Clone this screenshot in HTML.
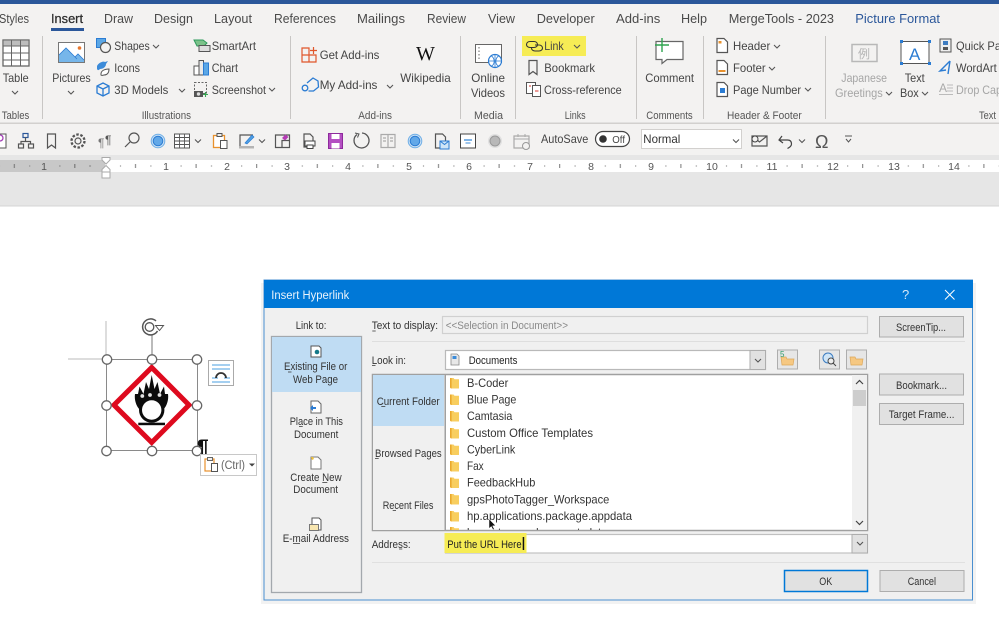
<!DOCTYPE html>
<html lang="en"><head><meta charset="utf-8"><title>Insert Hyperlink</title>
<style>
html,body{margin:0;padding:0;background:#fff;width:999px;height:617px;overflow:hidden}
svg.root{display:block;filter:blur(.3px)}
text{font-family:"Liberation Sans",sans-serif;font-size:12px;fill:#444}
.tab{font-size:13px;fill:#4a4a4a}
.g{font-size:11px;fill:#555}
.d{font-size:11px;fill:#333}
.f{font-size:12px;fill:#333}
.dis{fill:#a5a5a5}
.r{font-size:10.5px;fill:#555;text-anchor:middle}
.ln{fill:none;stroke:#555;stroke-width:1.2}
.bl{fill:none;stroke:#2b7cd3;stroke-width:1.3}
.btn{fill:#e1e1e1;stroke:#adadad;stroke-width:1}
</style></head><body>
<svg class="root" width="999" height="617" viewBox="0 0 999 617" xmlns="http://www.w3.org/2000/svg">
<defs>
<pattern id="rt" x="105" y="160" width="60.6" height="12" patternUnits="userSpaceOnUse">
<rect x="15" y="5.5" width="1" height="1" fill="#666"/><rect x="30" y="4" width="1" height="4" fill="#777"/><rect x="45.4" y="5.5" width="1" height="1" fill="#666"/>
</pattern>
<symbol id="fd" viewBox="0 0 10 12" overflow="visible"><path d="M0 1h3.5l1 1.2H9v9.3H1L0 10.500z" fill="#f8ce5f"/><path d="M0 1h1.600v10.500H1L0 10.500z" fill="#eaa92e"/></symbol>
<symbol id="ch" viewBox="0 0 8 5" overflow="visible"><path d="M1 1l3 3 3-3" fill="none" stroke="#555" stroke-width="1.100"/></symbol>
</defs>

<!-- backgrounds -->
<rect width="999" height="617" fill="#fff"/>
<rect width="999" height="4" fill="#2b579a"/>
<rect y="4" width="999" height="152" fill="#f3f2f1"/>
<rect y="122.500" width="999" height="1.500" fill="#d2d0ce"/>
<rect y="155" width="999" height="51" fill="#e6e6e6"/>
<rect y="205.500" width="999" height="1" fill="#d4d4d4"/>
<rect y="160" width="999" height="12" fill="#fff"/>
<rect y="160" width="105" height="12" fill="#c8c8c8"/>
<rect y="160" width="999" height="12" fill="url(#rt)"/>

<!-- tabs -->
<text class="tab" x="-1" y="23" textLength="30" lengthAdjust="spacingAndGlyphs">Styles</text>
<text class="tab" x="51" y="23" textLength="32" lengthAdjust="spacingAndGlyphs" style="fill:#2b2b2b" stroke="#333" stroke-width=".25">Insert</text>
<text class="tab" x="104" y="23" textLength="29" lengthAdjust="spacingAndGlyphs">Draw</text>
<text class="tab" x="154" y="23" textLength="39" lengthAdjust="spacingAndGlyphs">Design</text>
<text class="tab" x="214" y="23" textLength="38" lengthAdjust="spacingAndGlyphs">Layout</text>
<text class="tab" x="274" y="23" textLength="62" lengthAdjust="spacingAndGlyphs">References</text>
<text class="tab" x="357" y="23" textLength="48" lengthAdjust="spacingAndGlyphs">Mailings</text>
<text class="tab" x="427" y="23" textLength="39" lengthAdjust="spacingAndGlyphs">Review</text>
<text class="tab" x="488" y="23" textLength="27" lengthAdjust="spacingAndGlyphs">View</text>
<text class="tab" x="536.700" y="23" textLength="58" lengthAdjust="spacingAndGlyphs">Developer</text>
<text class="tab" x="616" y="23" textLength="44.300" lengthAdjust="spacingAndGlyphs">Add-ins</text>
<text class="tab" x="681" y="23" textLength="26" lengthAdjust="spacingAndGlyphs">Help</text>
<text class="tab" x="728.700" y="23" textLength="105.300" lengthAdjust="spacingAndGlyphs">MergeTools - 2023</text>
<text class="tab" x="855.300" y="23" textLength="84.700" lengthAdjust="spacingAndGlyphs" style="fill:#2b579a">Picture Format</text>
<rect x="51" y="28" width="33" height="3" fill="#2b579a"/>

<!-- ribbon separators -->
<g fill="#c8c6c4"><rect x="42" y="36" width="1" height="83"/><rect x="290" y="36" width="1" height="83"/><rect x="460" y="36" width="1" height="83"/><rect x="515" y="36" width="1" height="83"/><rect x="636" y="36" width="1" height="83"/><rect x="703" y="36" width="1" height="83"/><rect x="825" y="36" width="1" height="83"/></g>

<rect x="522" y="36" width="64" height="20" fill="#f6ec55"/>

<!-- ribbon labels -->
<text x="2.700" y="82" textLength="26" lengthAdjust="spacingAndGlyphs">Table</text>
<text x="52.300" y="82" textLength="38.400" lengthAdjust="spacingAndGlyphs">Pictures</text>
<text x="114.300" y="50" textLength="35.400" lengthAdjust="spacingAndGlyphs">Shapes</text>
<text x="114.300" y="72" textLength="25.700" lengthAdjust="spacingAndGlyphs">Icons</text>
<text x="114.300" y="94" textLength="54" lengthAdjust="spacingAndGlyphs">3D Models</text>
<text x="211.700" y="50" textLength="44.300" lengthAdjust="spacingAndGlyphs">SmartArt</text>
<text x="211.700" y="72" textLength="26.300" lengthAdjust="spacingAndGlyphs">Chart</text>
<text x="211.700" y="94" textLength="54.300" lengthAdjust="spacingAndGlyphs">Screenshot</text>
<text x="319.700" y="59" textLength="59.700" lengthAdjust="spacingAndGlyphs">Get Add-ins</text>
<text x="319.700" y="89" textLength="57.700" lengthAdjust="spacingAndGlyphs">My Add-ins</text>
<text x="400.300" y="82" textLength="50.400" lengthAdjust="spacingAndGlyphs">Wikipedia</text>
<text x="471.300" y="82" textLength="33.700" lengthAdjust="spacingAndGlyphs">Online</text>
<text x="471" y="97" textLength="34" lengthAdjust="spacingAndGlyphs">Videos</text>
<text x="544.300" y="50" textLength="19.400" lengthAdjust="spacingAndGlyphs">Link</text>
<text x="544.300" y="72" textLength="50.700" lengthAdjust="spacingAndGlyphs">Bookmark</text>
<text x="544" y="94" textLength="77.700" lengthAdjust="spacingAndGlyphs">Cross-reference</text>
<text x="645.300" y="82" textLength="48.700" lengthAdjust="spacingAndGlyphs">Comment</text>
<text x="733" y="50" textLength="37.300" lengthAdjust="spacingAndGlyphs">Header</text>
<text x="733" y="72" textLength="32.700" lengthAdjust="spacingAndGlyphs">Footer</text>
<text x="733" y="94" textLength="68" lengthAdjust="spacingAndGlyphs">Page Number</text>
<text class="dis" x="841.300" y="82" textLength="45.700" lengthAdjust="spacingAndGlyphs">Japanese</text>
<text class="dis" x="835" y="97" textLength="47.700" lengthAdjust="spacingAndGlyphs">Greetings</text>
<text x="904.700" y="82" textLength="20" lengthAdjust="spacingAndGlyphs">Text</text>
<text x="900" y="97" textLength="18.700" lengthAdjust="spacingAndGlyphs">Box</text>
<text x="956" y="50" textLength="45" lengthAdjust="spacingAndGlyphs">Quick Pa</text>
<text x="956" y="72" textLength="40.700" lengthAdjust="spacingAndGlyphs">WordArt</text>
<text class="dis" x="956" y="94" textLength="46" lengthAdjust="spacingAndGlyphs">Drop Cap</text>

<text class="g" x="1.700" y="119" textLength="27.600" lengthAdjust="spacingAndGlyphs">Tables</text>
<text class="g" x="141.700" y="119" textLength="49.300" lengthAdjust="spacingAndGlyphs">Illustrations</text>
<text class="g" x="358.300" y="119" textLength="33.700" lengthAdjust="spacingAndGlyphs">Add-ins</text>
<text class="g" x="474" y="119" textLength="29" lengthAdjust="spacingAndGlyphs">Media</text>
<text class="g" x="564.700" y="119" textLength="21" lengthAdjust="spacingAndGlyphs">Links</text>
<text class="g" x="646.300" y="119" textLength="46.400" lengthAdjust="spacingAndGlyphs">Comments</text>
<text class="g" x="727" y="119" textLength="74.700" lengthAdjust="spacingAndGlyphs">Header &amp; Footer</text>
<text class="g" x="979" y="119" textLength="17" lengthAdjust="spacingAndGlyphs">Text</text>

<!-- ribbon chevrons -->
<use href="#ch" x="11" y="90" width="8" height="5"/>
<use href="#ch" x="67" y="90" width="8" height="5"/>
<use href="#ch" x="152" y="44" width="8" height="5"/>
<use href="#ch" x="178" y="88" width="8" height="5"/>
<use href="#ch" x="268" y="87" width="8" height="5"/>
<use href="#ch" x="386" y="84" width="8" height="5"/>
<use href="#ch" x="573" y="44" width="8" height="5"/>
<use href="#ch" x="773" y="44" width="8" height="5"/>
<use href="#ch" x="768" y="66" width="8" height="5"/>
<use href="#ch" x="804" y="87" width="8" height="5"/>
<use href="#ch" x="885" y="91" width="8" height="5"/>
<use href="#ch" x="921" y="91" width="8" height="5"/>

<!-- Table icon -->
<rect x="3" y="40" width="26" height="26" fill="#fff" stroke="#666" stroke-width="1.300"/>
<rect x="3" y="40" width="26" height="6" fill="#bdbdbd" stroke="#666"/>
<path d="M11.500 40v26M20.500 40v26M3 53h26M3 60h26" stroke="#666" fill="none"/>
<!-- Pictures -->
<rect x="58.500" y="42.500" width="26" height="20" fill="#fff" stroke="#777"/>
<path d="M59 62V55l7-7 9 9 3-3 6 6v2z" fill="#76b6ea"/>
<path d="M75 57l3-3 6 6" fill="none" stroke="#2b7cd3" stroke-width=".8"/>
<path d="M59 55l7-7 11 11" fill="none" stroke="#2b7cd3" stroke-width=".8"/>
<circle cx="79.500" cy="48" r="1.800" fill="#e8772e"/>
<!-- Shapes -->
<rect x="96.500" y="38.500" width="9" height="9" fill="#5ba7e6" stroke="#2b7cd3"/>
<circle cx="105.500" cy="47.500" r="5" fill="#f3f2f1" stroke="#555" stroke-width="1.200"/>
<!-- Icons -->
<path d="M97 66c2-4 7-5 8-4l3-1-2 3c0 3-3 5-6 5-1 1-2 2-3 0z" fill="#3c8bd9"/>
<path d="M101 74c0-3 3-5 8-5 0 4-2 6-5 6-1 0-2 1-3 0z" fill="#fff" stroke="#555"/>
<!-- 3D models -->
<path class="bl" d="M103 83l6 3v7l-6 3-6-3v-7zM97 86l6 3 6-3M103 89v7"/>
<!-- SmartArt -->
<path d="M194 40h9l4 3-3 3h-7z" fill="#7cc28a" stroke="#2d9a5c"/>
<rect x="199" y="45.500" width="11" height="6" fill="#ddd" stroke="#555"/>
<!-- Chart -->
<rect x="194" y="66" width="5" height="9" fill="#fff" stroke="#555"/>
<rect x="199" y="60.500" width="4.500" height="14.500" fill="#e9e9e9" stroke="#555"/>
<rect x="203.500" y="63" width="5" height="12" fill="#5ba7e6" stroke="#2b7cd3"/>
<!-- Screenshot -->
<rect x="194.500" y="82.500" width="12" height="11" fill="none" stroke="#666" stroke-dasharray="2 1.500"/>
<rect x="194" y="91" width="9" height="6" fill="#555"/><circle cx="198.500" cy="94" r="1.700" fill="#ddd"/>
<path d="M205.500 92v5M203 94.500h5" stroke="#35a853" stroke-width="1.100"/>
<!-- Get add-ins -->
<path d="M302 48h7v7h-7zM302 55h7v7h-7zM309 55h7v7h-7z" fill="none" stroke="#e0562b" stroke-width="1.200"/>
<path d="M313.500 47v7M310 50.500h7" stroke="#e0562b" stroke-width="1.200"/>
<!-- My add-ins -->
<path class="bl" d="M307 83l6-5 5 3 .5 6-5 4h-5"/><circle cx="305" cy="88" r="2.800" class="bl"/>
<!-- Wikipedia -->
<text x="416" y="60" style="font-family:'Liberation Serif',serif;font-size:20px;fill:#111">W</text>
<!-- Online videos -->
<rect x="475.500" y="44.500" width="26" height="18" fill="#fff" stroke="#666"/>
<path d="M479 47v13" stroke="#666" stroke-dasharray="1.500 2"/>
<circle cx="495" cy="61" r="6.500" fill="#fff" stroke="#2b7cd3" stroke-width="1.200"/>
<path d="M488.500 61h13M495 54.500v13M491.500 56c3 2 4 8 0 10M498.500 56c-3 2-4 8 0 10" class="bl" style="stroke-width:.8"/>
<!-- Link icon -->
<path d="M530 41.500h4c2 0 3.500 1.300 3.500 3s-1.500 3-3.500 3h-4c-2 0-3.500-1.300-3.500-3s1.500-3 3.500-3z" fill="none" stroke="#333" stroke-width="1.100"/>
<path d="M535 45h4c2 0 3.500 1.300 3.500 3s-1.500 3-3.500 3h-4c-2 0-3.500-1.300-3.500-3" fill="none" stroke="#333" stroke-width="1.100"/>
<!-- Bookmark -->
<path class="ln" d="M529 60.500v14l4-3 4 3v-14z"/>
<!-- Cross reference -->
<rect x="526.500" y="82.500" width="9" height="11" fill="#fff" stroke="#555"/>
<rect x="532.500" y="85.500" width="8" height="11" fill="#fff" stroke="#555"/>
<path d="M535 91h3.500" stroke="#d9342b"/><path d="M529 86h2" stroke="#d9342b"/>
<!-- Comment -->
<path d="M656 41.500h27v18h-16l-5 4v-4h-6z" fill="#fff" stroke="#666" stroke-width="1.200"/>
<path d="M662 38v14M655 45h14" stroke="#2ea44f" stroke-width="1.400"/>
<!-- Header/Footer/page -->
<path class="ln" d="M717 38.500h7l3.500 3.500v10.500H717z" style="fill:#fff"/><rect x="718.500" y="41" width="3" height="2.500" fill="#e8912d"/>
<path class="ln" d="M717 60.500h7l3.500 3.500v10.500H717z" style="fill:#fff"/><rect x="718.500" y="70" width="7" height="2" fill="#e8912d"/>
<path class="ln" d="M717 82.500h7l3.500 3.500v10.500H717z" style="fill:#fff"/><rect x="720" y="88" width="5" height="5" fill="#2b7cd3"/>
<!-- Japanese greetings -->
<rect x="852" y="44.500" width="25" height="17" fill="#f3f2f1" stroke="#b8b8b8" stroke-width="1.500"/>
<text x="858" y="58" style="font-family:'Noto Sans CJK JP',sans-serif;font-size:12px;fill:#b5b5b5">例</text>
<!-- Textbox -->
<rect x="901" y="41.500" width="28" height="22" fill="#fff" stroke="#555"/>
<g fill="#2b7cd3"><rect x="900" y="40" width="3" height="3"/><rect x="928" y="40" width="3" height="3"/><rect x="900" y="62" width="3" height="3"/><rect x="928" y="62" width="3" height="3"/></g>
<text x="909" y="60" style="font-size:17px;fill:#2b7cd3">A</text>
<!-- Quick parts, WordArt, DropCap -->
<rect x="940" y="39" width="11" height="13" fill="#eee" stroke="#555"/><rect x="943" y="41" width="5" height="4" fill="#3e7cc0"/><rect x="943" y="47" width="5" height="3" fill="#555"/>
<path d="M950 61l-10 10 6-1M950 61l-2 13" fill="none" stroke="#2b7cd3" stroke-width="1.400"/>
<text x="939" y="92" style="font-size:12px;fill:#aaa">A</text><path d="M947 85h6M947 88h6M947 91h6M939 94.500h14" stroke="#bbb"/>

<!-- QAT -->
<rect x="-3" y="134" width="9" height="14" fill="#fff" stroke="#555"/><circle cx="0" cy="138" r="3" fill="none" stroke="#a23fb5" stroke-width="1.300"/>
<g class="ln"><rect x="23" y="133.500" width="5" height="4" stroke="#2b579a" fill="none"/><rect x="18.500" y="144" width="5" height="4" fill="none" stroke="#555"/><rect x="28.500" y="144" width="5" height="4" fill="none" stroke="#555"/><path d="M25.500 137.500v4M21 144v-2.500h9.500v2.500"/></g>
<path class="ln" d="M47.500 134v14l4-3 4 3v-14z"/>
<circle cx="78" cy="141" r="3" class="ln"/><circle cx="78" cy="141" r="6.500" fill="none" stroke="#555" stroke-width="2.300" stroke-dasharray="2.500 1.600"/>
<text x="98" y="147" style="font-size:12px;fill:#777">¶</text><text x="105" y="144" style="font-size:12px;fill:#555">¶</text>
<circle cx="134" cy="138" r="5" class="ln"/><path class="ln" d="M130 142l-5 5"/>
<g id="radio"><circle cx="158" cy="141" r="7" fill="#cde2f5"/><circle cx="158" cy="141" r="6.800" fill="none" stroke="#6eaee6"/><circle cx="158" cy="141" r="4.800" fill="#62a8e8" stroke="#2b7cd3"/></g>
<rect x="174.500" y="134" width="15" height="14" fill="#fff" stroke="#555"/><path d="M174.500 137.500h15M174.500 141h15M174.500 144.500h15M179.500 134v14M184.500 134v14" stroke="#555" fill="none" stroke-width=".9"/>
<use href="#ch" x="194" y="138.500" width="8" height="5"/>
<rect x="213.500" y="135.500" width="11" height="12" fill="#fff" stroke="#e8912d" stroke-width="1.300"/><rect x="217" y="133.500" width="5" height="3" fill="#eee" stroke="#555"/><rect x="220.500" y="140.500" width="6.500" height="8" fill="#fff" stroke="#555"/>
<path d="M240 146v-11h13" class="ln"/><path d="M245 143l7-8 2 2-7 7z" fill="#4f9fe3" stroke="#2b7cd3" stroke-width=".7"/><rect x="239" y="146" width="15" height="2.500" fill="#b4b4b4"/>
<use href="#ch" x="258" y="138.500" width="8" height="5"/>
<path class="ln" d="M275.500 135h14v12.500h-14zM282 147.500v-7h7"/><path d="M282 138l3.500-3.500 3 2.500-3.500 3.500z" fill="#b53bb5"/>
<path class="ln" d="M304 134h6l3 3v10h-9z"/><rect x="305" y="141" width="10" height="5" fill="#fff" stroke="#444"/><rect x="307" y="145" width="6" height="3.500" fill="#fff" stroke="#444"/>
<rect x="328.500" y="133.500" width="14" height="15" fill="#b44fc2" stroke="#8e2a9c"/><rect x="331.500" y="134" width="8" height="5" fill="#fff"/><rect x="331.500" y="143" width="8" height="5.500" fill="#fff"/>
<path d="M357 134.500a7.500 7.500 0 1 0 5-1.500" fill="none" stroke="#555" stroke-width="1.300"/><path d="M355 133l4 1-1.500 3.500" fill="none" stroke="#555"/>
<path d="M381 134.500h14v13h-14zM388 134.500v13M383 138h3M383 141h3M390 138h3M390 141h3" fill="none" stroke="#aaa" stroke-width="1.200"/>
<use href="#radio" x="257"/>
<path class="ln" d="M435.500 134h7l3 3v11h-10z"/><rect x="440" y="141" width="9" height="8" fill="#cfe5f7" stroke="#2b7cd3"/><path d="M440 141l4.500 3.500 4.500-3.500" stroke="#2b7cd3" fill="none"/>
<rect x="460.500" y="134" width="15" height="14" fill="#fff" stroke="#444"/><path d="M464 140h8" stroke="#3c8bd9" stroke-width="1.300"/><path d="M465.500 143h5" stroke="#3c8bd9"/>
<circle cx="495" cy="141" r="7" fill="#e0e0e0"/><circle cx="495" cy="141" r="5" fill="#b8b8b8" stroke="#999"/>
<path d="M514 136h15v12h-15z" fill="none" stroke="#aaa" stroke-width="1.200"/><path d="M514 139h15M518 134v3M525 134v3" stroke="#aaa"/><circle cx="526" cy="146" r="3.500" fill="#f3f2f1" stroke="#999"/>
<text x="541" y="143" textLength="47.300" lengthAdjust="spacingAndGlyphs">AutoSave</text>
<rect x="595.500" y="131.500" width="34" height="15" rx="7.500" fill="#fff" stroke="#444" stroke-width="1.200"/>
<circle cx="603" cy="139" r="3.800" fill="#333"/>
<text x="612.300" y="143" textLength="12.700" lengthAdjust="spacingAndGlyphs" style="font-size:10.500px">Off</text>
<rect x="641.500" y="129.500" width="100" height="19" fill="#fff" stroke="#d2d0ce"/>
<text x="643.300" y="143" textLength="37" lengthAdjust="spacingAndGlyphs" style="fill:#333">Normal</text>
<use href="#ch" x="732" y="138.500" width="8" height="5"/>
<path class="ln" d="M752 136h15v10h-15zM752 136l7.500 6 7.500-6"/><circle cx="755" cy="139" r="3" fill="#f3f2f1" stroke="#444"/>
<path d="M782 136l-3 4 4 3M779.500 140h8c3 0 4 2 4 4s-1.500 3-4 4.500" fill="none" stroke="#444" stroke-width="1.200"/>
<use href="#ch" x="798" y="138.500" width="8" height="5"/>
<text x="815" y="148" style="font-size:18px;fill:#555">Ω</text>
<path d="M845 136h7M846 139l2.500 3 2.500-3" fill="none" stroke="#555"/>

<!-- ruler numbers -->
<text class="r" x="44" y="170">1</text>
<g fill="#888"><rect x="14" y="164" width="1" height="4"/><rect x="29" y="165.500" width="1" height="1"/><rect x="59" y="165.500" width="1" height="1"/><rect x="74" y="164" width="1" height="4"/><rect x="89" y="165.500" width="1" height="1"/></g>
<text class="r" x="166" y="170">1</text><text class="r" x="227" y="170">2</text><text class="r" x="287" y="170">3</text><text class="r" x="348" y="170">4</text><text class="r" x="409" y="170">5</text><text class="r" x="469" y="170">6</text><text class="r" x="530" y="170">7</text><text class="r" x="591" y="170">8</text><text class="r" x="651" y="170">9</text><text class="r" x="712" y="170">10</text><text class="r" x="772" y="170">11</text><text class="r" x="833" y="170">12</text><text class="r" x="894" y="170">13</text><text class="r" x="954" y="170">14</text>
<path d="M102 157.500h8v2.500l-4 4-4-4z" fill="#fff" stroke="#aaa"/>
<path d="M102 172v-2.500l4-4 4 4v2.500zM102 172h8v6h-8z" fill="#fff" stroke="#aaa"/>

<!-- Picture selection -->
<path d="M106 321v38M68 359h38" stroke="#bbb"/>
<path d="M152 335v24" stroke="#777"/>
<path d="M156 321a8 8 0 1 0 1.500 10" fill="none" stroke="#555" stroke-width="1.500"/><circle cx="149.500" cy="327" r="4.300" fill="none" stroke="#555" stroke-width="1.300"/><path d="M155.500 325.500h8l-4 5z" fill="#fff" stroke="#555"/>
<rect x="106.500" y="359.500" width="91" height="91" fill="#fff" stroke="#8a8a8a"/>
<path d="M151.700 367.500L189 405l-37.300 37.500L114 405z" fill="#fff" stroke="#de0a1e" stroke-width="5"/>
<path d="M151.700 375L154.500 389L157.500 382L160 394L164 386.500L165 394L168 394C169 401 166 407 163 410H140C137 407 134 401 135 394L138 394L139.500 386.500L143.500 394L146 382L149 389Z" fill="#0c0c0c"/>
<circle cx="151.700" cy="410" r="12.700" fill="#0c0c0c"/><circle cx="151.700" cy="410" r="9.700" fill="#fff"/>
<circle cx="142.300" cy="396" r="1.900" fill="#e4e4e4"/><circle cx="150" cy="395" r="1.900" fill="#e4e4e4"/><circle cx="159.500" cy="395" r="1.900" fill="#e4e4e4"/>
<rect x="138.300" y="422.700" width="26.700" height="2.500" fill="#0c0c0c"/>
<g fill="#fff" stroke="#666" stroke-width="1.300"><circle cx="107" cy="359.500" r="4.700"/><circle cx="152" cy="359.500" r="4.700"/><circle cx="197" cy="359.500" r="4.700"/><circle cx="106.500" cy="405.500" r="4.700"/><circle cx="197" cy="405.500" r="4.700"/><circle cx="106.500" cy="451" r="4.700"/><circle cx="152" cy="451" r="4.700"/><circle cx="197" cy="451" r="4.700"/></g>
<rect x="208.500" y="360.500" width="25" height="25" fill="#fff" stroke="#aaa"/>
<path d="M212 365h18M212 369h18M212 378h6M224 378h6M212 382h18" stroke="#4a9fe0" stroke-width="1.100"/>
<path d="M216 378a5 5 0 0 1 10 0" fill="none" stroke="#333" stroke-width="1.800"/>
<text x="197" y="454" style="font-size:21px;font-weight:bold;fill:#111">¶</text>
<rect x="200.500" y="454.500" width="56" height="21" fill="#fff" stroke="#c8c8c8"/>
<rect x="205" y="459" width="9" height="12" fill="#fff" stroke="#e8912d" stroke-width="1.200"/><rect x="207.500" y="457.500" width="5" height="3" fill="#eee" stroke="#666"/><rect x="211.500" y="463.500" width="6" height="8" fill="#fff" stroke="#555"/>
<text x="221" y="469" textLength="24" lengthAdjust="spacingAndGlyphs" style="font-size:11.500px;fill:#666">(Ctrl)</text>
<path d="M249 463.500h6l-3 3z" fill="#444"/>

<!-- Dialog -->
<rect x="261" y="283" width="715" height="321" fill="#000" opacity=".05"/>
<rect x="264" y="280" width="708.500" height="320" fill="#f0f0f0" stroke="#4a8fd0"/>
<rect x="264" y="280" width="709" height="28" fill="#0078d7"/>
<text x="271.300" y="299" textLength="78" lengthAdjust="spacingAndGlyphs" style="fill:#eaf3fb;font-size:11.500px">Insert Hyperlink</text>
<text x="902" y="299" style="fill:#d5e8f8;font-size:13px">?</text>
<path d="M945 290l9.500 9.500M954.500 290L945 299.500" stroke="#fff" stroke-width="1"/>

<text class="d" x="295.700" y="329" textLength="30.700" lengthAdjust="spacingAndGlyphs">Link to:</text>
<rect x="271.500" y="336.500" width="90" height="256" fill="#f0f0f0" stroke="#a3a8ad" stroke-width="1.300"/>
<rect x="272" y="337" width="89" height="55" fill="#bfdcf3"/>
<text class="d" x="284" y="370" textLength="63.300" lengthAdjust="spacingAndGlyphs">Existing File or</text>
<text class="d" x="293" y="383" textLength="45" lengthAdjust="spacingAndGlyphs">Web Page</text>
<text class="d" x="289.700" y="425" textLength="53.300" lengthAdjust="spacingAndGlyphs">Place in This</text>
<text class="d" x="294" y="438" textLength="44.300" lengthAdjust="spacingAndGlyphs">Document</text>
<text class="d" x="290.300" y="481" textLength="51.300" lengthAdjust="spacingAndGlyphs">Create New</text>
<text class="d" x="293.300" y="493" textLength="44.700" lengthAdjust="spacingAndGlyphs">Document</text>
<text class="d" x="282.700" y="542" textLength="66.300" lengthAdjust="spacingAndGlyphs">E-mail Address</text>
<path d="M311 346h8l2 2v9h-10z" fill="#fff" stroke="#555"/><circle cx="317" cy="352" r="2.300" fill="#167a8a"/>
<path d="M311 401h7l3 3v9h-10z" fill="#fff" stroke="#666"/><path d="M310 408l3-3v2h3v2h-3v2z" fill="#2b7cd3"/>
<path d="M311 457h7l3 3v9h-10z" fill="#fff" stroke="#777"/><path d="M311 457l1 3 2-1-1-2z" fill="#f0c23a"/>
<path d="M312 518h7l2 2v10h-9z" fill="#fff" stroke="#555"/><rect x="309.500" y="524.500" width="9" height="6" fill="#f8e6b0" stroke="#777"/>

<text class="d" x="371.700" y="329" textLength="66.300" lengthAdjust="spacingAndGlyphs">Text to display:</text>
<rect x="442.500" y="316.500" width="425" height="17" fill="#f0f0f0" stroke="#d0d0d0" stroke-width="1.200"/>
<text x="445.700" y="329" textLength="122.300" lengthAdjust="spacingAndGlyphs" style="font-size:11px;fill:#8a8a8a">&lt;&lt;Selection in Document&gt;&gt;</text>
<rect x="372" y="341" width="593" height="1" fill="#dedede"/>
<text class="d" x="371.700" y="364" textLength="34.300" lengthAdjust="spacingAndGlyphs">Look in:</text>
<rect x="445.500" y="350.500" width="320" height="19" fill="#fff" stroke="#b9b9b9" stroke-width="1.200"/>
<rect x="750" y="350.500" width="15.500" height="19" fill="#e1e1e1" stroke="#adadad"/>
<use href="#ch" x="754" y="358" width="8" height="5"/>
<path d="M451 354h6l2 2v9h-8z" fill="#e8e8e8" stroke="#888" stroke-width=".8"/><rect x="452.500" y="356" width="4" height="3" fill="#3c8bd9"/>
<text class="d" x="468.700" y="364" textLength="48.700" lengthAdjust="spacingAndGlyphs" style="fill:#222">Documents</text>
<rect x="777.500" y="350" width="20" height="19" class="btn" style="fill:#e6e6e6"/><path d="M781 357h5l1 2h7l-1 6h-11z" fill="#f6c882" stroke="#dca65a" stroke-width=".7"/><text x="780" y="357" style="font-size:8px;fill:#2d9a6a">5</text>
<rect x="819.500" y="350" width="20" height="19" class="btn" style="fill:#e6e6e6"/><circle cx="828" cy="358" r="5" fill="#cfe5f7" stroke="#3c7cc0"/><circle cx="831" cy="361" r="3" fill="#eee" stroke="#444"/><path d="M833 363l3 3" stroke="#444"/>
<rect x="846.500" y="350" width="20" height="19" class="btn" style="fill:#e6e6e6"/><path d="M850 357h5l1 2h7l-1 6h-11z" fill="#f6c882" stroke="#dca65a" stroke-width=".7"/>

<!-- nav panel + list -->
<rect x="372.500" y="374.500" width="495" height="156" fill="#fff" stroke="#a0a0a0" stroke-width="1.500"/>
<rect x="373" y="375" width="72" height="155" fill="#f0f0f0"/>
<rect x="373" y="375" width="71" height="51" fill="#bfdcf3"/>
<rect x="444.500" y="374" width="1.500" height="157" fill="#a0a0a0"/>
<text class="d" x="376.700" y="405" textLength="63" lengthAdjust="spacingAndGlyphs">Current Folder</text>
<text class="d" x="375" y="457" textLength="66.700" lengthAdjust="spacingAndGlyphs">Browsed Pages</text>
<text class="d" x="382.700" y="509" textLength="50.700" lengthAdjust="spacingAndGlyphs">Recent Files</text>
<svg x="446" y="375" width="406" height="155" viewBox="446 375 406 155">
<use href="#fd" x="450" y="377" width="10" height="12"/><text class="f" x="467" y="387" textLength="41.300" lengthAdjust="spacingAndGlyphs">B-Coder</text>
<use href="#fd" x="450" y="393.500" width="10" height="12"/><text class="f" x="467" y="403.500" textLength="49.300" lengthAdjust="spacingAndGlyphs">Blue Page</text>
<use href="#fd" x="450" y="410" width="10" height="12"/><text class="f" x="467" y="420" textLength="45.300" lengthAdjust="spacingAndGlyphs">Camtasia</text>
<use href="#fd" x="450" y="427" width="10" height="12"/><text class="f" x="467" y="437" textLength="126" lengthAdjust="spacingAndGlyphs">Custom Office Templates</text>
<use href="#fd" x="450" y="443.500" width="10" height="12"/><text class="f" x="467" y="453.500" textLength="48.300" lengthAdjust="spacingAndGlyphs">CyberLink</text>
<use href="#fd" x="450" y="460" width="10" height="12"/><text class="f" x="467" y="470" textLength="16.700" lengthAdjust="spacingAndGlyphs">Fax</text>
<use href="#fd" x="450" y="476.500" width="10" height="12"/><text class="f" x="467" y="486.500" textLength="68.300" lengthAdjust="spacingAndGlyphs">FeedbackHub</text>
<use href="#fd" x="450" y="493" width="10" height="12"/><text class="f" x="467" y="503.500" textLength="142.300" lengthAdjust="spacingAndGlyphs">gpsPhotoTagger_Workspace</text>
<use href="#fd" x="450" y="510" width="10" height="12"/><text class="f" x="467" y="520" textLength="165" lengthAdjust="spacingAndGlyphs">hp.applications.package.appdata</text>
<use href="#fd" x="450" y="526" width="10" height="12"/><text class="f" x="467" y="536.500" textLength="140" lengthAdjust="spacingAndGlyphs">hp.system.package.metadata</text>
</svg>
<rect x="852" y="375" width="15" height="155" fill="#f0f0f0"/>
<rect x="853" y="390" width="13" height="16" fill="#cdcdcd"/>
<path d="M856 384l3.500-3.500 3.500 3.500M856 521l3.500 3.500 3.500-3.500" fill="none" stroke="#444" stroke-width="1.200"/>
<path d="M489 519v9.500l2.300-2 1.700 3.300 1.300-.7-1.700-3.200 3-.2z" fill="#111" stroke="#fff" stroke-width=".5"/>

<text class="d" x="371.700" y="548" textLength="39" lengthAdjust="spacingAndGlyphs">Address:</text>
<rect x="445.500" y="534.500" width="422" height="18.500" fill="#fff" stroke="#c0c0c0" stroke-width="1.200"/>
<rect x="444.500" y="533" width="82" height="20" fill="#f6ec55"/>
<text x="447.300" y="548" textLength="74.300" lengthAdjust="spacingAndGlyphs" style="font-size:11px;fill:#222">Put the URL Here</text>
<rect x="522.700" y="537" width="1.500" height="13" fill="#111"/>
<rect x="852" y="534.500" width="15.500" height="18.500" fill="#e1e1e1" stroke="#adadad"/>
<use href="#ch" x="856" y="541" width="8" height="5"/>
<rect x="372" y="562" width="593" height="1" fill="#e0e0e0"/>

<!-- access key underlines -->
<path d="M372.300 331h3.400M372 365.500h3.500M288 372h3.500M299 426.500h3.700M322.300 482.500h5M293 543.500h7M381.300 406.500h4M375 458.500h3.700M392.700 510.500h3.300M399 549h3.300M900.700 390h4M902.700 420.500h4.600M938.300 335.500h4.400" stroke="#333" stroke-width=".8" fill="none"/>

<!-- buttons -->
<rect x="879.500" y="316.500" width="84" height="20.500" class="btn"/><text class="d" x="896" y="331" textLength="50" lengthAdjust="spacingAndGlyphs">ScreenTip...</text>
<rect x="879.500" y="374" width="84" height="21" class="btn"/><text class="d" x="896" y="389" textLength="51" lengthAdjust="spacingAndGlyphs">Bookmark...</text>
<rect x="879.500" y="403.500" width="84" height="21" class="btn"/><text class="d" x="888.700" y="418" textLength="65.700" lengthAdjust="spacingAndGlyphs">Target Frame...</text>
<rect x="784.500" y="570.500" width="83" height="21" fill="#e1e1e1" stroke="#0078d7" stroke-width="1.500"/><text class="d" x="819.300" y="585" textLength="13" lengthAdjust="spacingAndGlyphs">OK</text>
<rect x="880" y="570.500" width="84" height="21" class="btn"/><text class="d" x="907.700" y="585" textLength="28.300" lengthAdjust="spacingAndGlyphs">Cancel</text>
</svg>
</body></html>
